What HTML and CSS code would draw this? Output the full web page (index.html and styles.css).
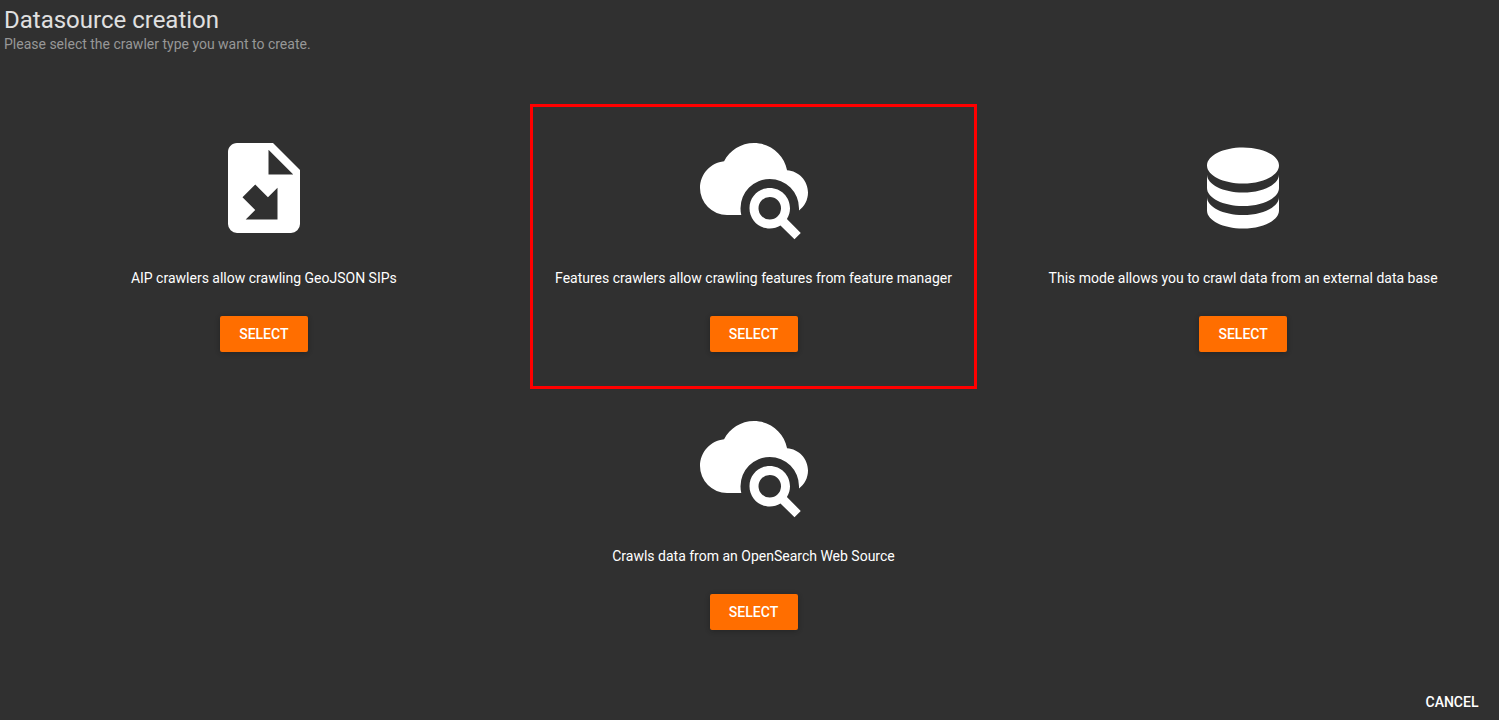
FILE: index.html
```html
<!DOCTYPE html>
<html lang="en">
<head>
<meta charset="utf-8">
<title>Datasource creation</title>
<link rel="stylesheet" href="styles.css">
</head>
<body>
<svg class="sprite" aria-hidden="true">
  <symbol id="cloud-search" viewBox="0 0 24 24">
    <path d="M9.18,18H6A6,6 0 0,1 0,12C0,8.91 2.34,6.36 5.35,6.04C6.6,3.64 9.11,2 12,2C15.64,2 18.67,4.59 19.35,8.04C21.95,8.22 24,10.36 24,13C24,14.65 23.21,16.1 22,17L22,16.5A6.5,6.5 0 0,0 15.5,10A6.5,6.5 0 0,0 9,16.5C9,17 9.06,17.5 9.18,18Z"/>
    <path d="M15.5,12C18,12 20,14 20,16.5C20,17.38 19.75,18.21 19.31,18.9L22.39,22L21,23.39L17.88,20.32C17.19,20.75 16.37,21 15.5,21C13,21 11,19 11,16.5C11,14 13,12 15.5,12M15.5,14A2.5,2.5 0 0,0 13,16.5A2.5,2.5 0 0,0 15.5,19A2.5,2.5 0 0,0 18,16.5A2.5,2.5 0 0,0 15.5,14Z"/>
  </symbol>
</svg>
<main class="page">
  <header class="header">
    <h1 class="title">Datasource creation</h1>
    <p class="subtitle">Please select the crawler type you want to create.</p>
  </header>
  <section class="crawlers">
    <article class="crawler">
      <svg class="icon" viewBox="0 0 24 24" aria-hidden="true"><path d="M6,2C4.89,2 4,2.9 4,4V20A2,2 0 0,0 6,22H18A2,2 0 0,0 20,20V8L14,2M13,3.5L18.5,9H13M10.05,11.22L12.88,14.05L15,11.93V19H7.93L10.05,16.88L7.22,14.05"/></svg>
      <p class="description">AIP crawlers allow crawling GeoJSON SIPs</p>
      <button class="select" type="button">SELECT</button>
    </article>
    <article class="crawler highlighted">
      <svg class="icon" aria-hidden="true"><use href="#cloud-search"/></svg>
      <p class="description">Features crawlers allow crawling features from feature manager</p>
      <button class="select" type="button">SELECT</button>
    </article>
    <article class="crawler">
      <svg class="icon" viewBox="0 0 24 24" aria-hidden="true"><path d="M12,3C7.58,3 4,4.79 4,7C4,9.21 7.58,11 12,11C16.42,11 20,9.21 20,7C20,4.79 16.42,3 12,3M4,9V12C4,14.21 7.58,16 12,16C16.42,16 20,14.21 20,12V9C20,11.21 16.42,13 12,13C7.58,13 4,11.21 4,9M4,14V17C4,19.21 7.58,21 12,21C16.42,21 20,19.21 20,17V14C20,16.21 16.42,18 12,18C7.58,18 4,16.21 4,14Z"/></svg>
      <p class="description">This mode allows you to crawl data from an external data base</p>
      <button class="select" type="button">SELECT</button>
    </article>
    <article class="crawler">
      <svg class="icon" aria-hidden="true"><use href="#cloud-search"/></svg>
      <p class="description">Crawls data from an OpenSearch Web Source</p>
      <button class="select" type="button">SELECT</button>
    </article>
  </section>
  <footer class="actions">
    <button class="cancel" type="button">CANCEL</button>
  </footer>
</main>
</body>
</html>
```
FILE: styles.css
```css
* {
  box-sizing: border-box;
}

body {
  margin: 0;
  background: #303030;
  color: #fff;
  font-family: Roboto, "Liberation Sans", sans-serif;
  font-size: 14px;
  line-height: 20px;
}

.sprite {
  position: absolute;
  width: 0;
  height: 0;
}

.page {
  display: flex;
  flex-direction: column;
  min-height: 100vh;
}

.header {
  padding: 4px 4px 0;
}

.title {
  margin: 0;
  color: #e0e0e0;
  font-size: 24px;
  font-weight: 400;
  line-height: 32px;
}

.subtitle {
  margin: 0;
  color: #979797;
  line-height: 16px;
}

.crawlers {
  display: flex;
  flex-wrap: wrap;
  justify-content: center;
  padding: 52px 11px 0 19px;
}

.crawler {
  position: relative;
  display: flex;
  flex: 0 0 calc(100% / 3);
  flex-direction: column;
  align-items: center;
  padding: 30px 0;
}

.highlighted::after {
  content: "";
  position: absolute;
  inset: 0 21px -7px;
  border: 3px solid #f00;
  pointer-events: none;
}

.icon {
  width: 108px;
  height: 108px;
  fill: #fff;
}

.description {
  margin: 26px 0 28px;
  text-align: center;
}

button {
  min-width: 88px;
  height: 36px;
  border: 0;
  color: #fff;
  font: 500 14px/36px Roboto, "Liberation Sans", sans-serif;
  cursor: pointer;
}

.select {
  padding: 0 16px;
  border-radius: 2px;
  background: #ff6e00;
  box-shadow: 0 1px 6px rgba(0, 0, 0, 0.12), 0 1px 4px rgba(0, 0, 0, 0.12);
}

.actions {
  display: flex;
  justify-content: flex-end;
  margin-top: auto;
  padding-right: 3px;
}

.cancel {
  padding: 0 16px;
  background: transparent;
}
```
